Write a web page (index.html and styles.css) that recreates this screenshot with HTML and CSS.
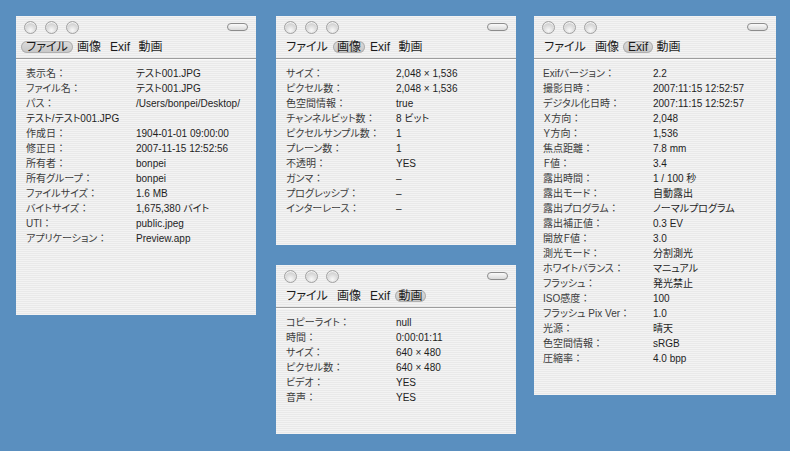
FILE: index.html
```html
<!DOCTYPE html>
<html lang="ja">
<head>
  <meta charset="UTF-8">
  <title>情報</title>
  <link rel="stylesheet" href="styles.css">
</head>
<body>
  <div class="desk">
    <div class="win win-file">
      <div class="titlebar">
        <div class="lights"><span class="light"></span><span class="light"></span><span class="light"></span></div>
        <span class="toolbar-btn"></span>
      </div>
      <div class="tabs">
        <span class="tab t1 active">ファイル</span><span class="tab t2">画像</span><span class="tab t3">Exif</span><span class="tab t4">動画</span>
      </div>
      <div class="sep"></div>
      <div class="rows">
        <div class="row"><span class="label">表示名</span><span class="value">テスト001.JPG</span></div>
        <div class="row"><span class="label">ファイル名</span><span class="value">テスト001.JPG</span></div>
        <div class="row"><span class="label">パス</span><span class="value">/Users/bonpei/Desktop/</span></div>
        <div class="row"><span class="value">テスト/テスト001.JPG</span></div>
        <div class="row"><span class="label">作成日</span><span class="value">1904-01-01 09:00:00</span></div>
        <div class="row"><span class="label">修正日</span><span class="value">2007-11-15 12:52:56</span></div>
        <div class="row"><span class="label">所有者</span><span class="value">bonpei</span></div>
        <div class="row"><span class="label">所有グループ</span><span class="value">bonpei</span></div>
        <div class="row"><span class="label">ファイルサイズ</span><span class="value">1.6 MB</span></div>
        <div class="row"><span class="label">バイトサイズ</span><span class="value">1,675,380 バイト</span></div>
        <div class="row"><span class="label">UTI</span><span class="value">public.jpeg</span></div>
        <div class="row"><span class="label">アプリケーション</span><span class="value">Preview.app</span></div>
      </div>
    </div>

    <div class="col">
      <div class="win win-image">
        <div class="titlebar">
          <div class="lights"><span class="light"></span><span class="light"></span><span class="light"></span></div>
          <span class="toolbar-btn"></span>
        </div>
        <div class="tabs">
          <span class="tab t1">ファイル</span><span class="tab t2 active">画像</span><span class="tab t3">Exif</span><span class="tab t4">動画</span>
        </div>
        <div class="sep"></div>
        <div class="rows">
          <div class="row"><span class="label">サイズ</span><span class="value">2,048 × 1,536</span></div>
          <div class="row"><span class="label">ピクセル数</span><span class="value">2,048 × 1,536</span></div>
          <div class="row"><span class="label">色空間情報</span><span class="value">true</span></div>
          <div class="row"><span class="label">チャンネルビット数</span><span class="value">8 ビット</span></div>
          <div class="row"><span class="label">ピクセルサンプル数</span><span class="value">1</span></div>
          <div class="row"><span class="label">プレーン数</span><span class="value">1</span></div>
          <div class="row"><span class="label">不透明</span><span class="value">YES</span></div>
          <div class="row"><span class="label">ガンマ</span><span class="value">–</span></div>
          <div class="row"><span class="label">プログレッシブ</span><span class="value">–</span></div>
          <div class="row"><span class="label">インターレース</span><span class="value">–</span></div>
        </div>
      </div>

      <div class="win win-movie">
        <div class="titlebar">
          <div class="lights"><span class="light"></span><span class="light"></span><span class="light"></span></div>
          <span class="toolbar-btn"></span>
        </div>
        <div class="tabs">
          <span class="tab t1">ファイル</span><span class="tab t2">画像</span><span class="tab t3">Exif</span><span class="tab t4 active">動画</span>
        </div>
        <div class="sep"></div>
        <div class="rows">
          <div class="row"><span class="label">コピーライト</span><span class="value">null</span></div>
          <div class="row"><span class="label">時間</span><span class="value">0:00:01:11</span></div>
          <div class="row"><span class="label">サイズ</span><span class="value">640 × 480</span></div>
          <div class="row"><span class="label">ピクセル数</span><span class="value">640 × 480</span></div>
          <div class="row"><span class="label">ビデオ</span><span class="value">YES</span></div>
          <div class="row"><span class="label">音声</span><span class="value">YES</span></div>
        </div>
      </div>
    </div>

    <div class="win win-exif">
      <div class="titlebar">
        <div class="lights"><span class="light"></span><span class="light"></span><span class="light"></span></div>
        <span class="toolbar-btn"></span>
      </div>
      <div class="tabs">
        <span class="tab t1">ファイル</span><span class="tab t2">画像</span><span class="tab t3 active">Exif</span><span class="tab t4">動画</span>
      </div>
      <div class="sep"></div>
      <div class="rows">
        <div class="row"><span class="label">Exifバージョン</span><span class="value">2.2</span></div>
        <div class="row"><span class="label">撮影日時</span><span class="value">2007:11:15 12:52:57</span></div>
        <div class="row"><span class="label">デジタル化日時</span><span class="value">2007:11:15 12:52:57</span></div>
        <div class="row"><span class="label">Ｘ方向</span><span class="value">2,048</span></div>
        <div class="row"><span class="label">Ｙ方向</span><span class="value">1,536</span></div>
        <div class="row"><span class="label">焦点距離</span><span class="value">7.8 mm</span></div>
        <div class="row"><span class="label">Ｆ値</span><span class="value">3.4</span></div>
        <div class="row"><span class="label">露出時間</span><span class="value">1 / 100 秒</span></div>
        <div class="row"><span class="label">露出モード</span><span class="value">自動露出</span></div>
        <div class="row"><span class="label">露出プログラム</span><span class="value">ノーマルプログラム</span></div>
        <div class="row"><span class="label">露出補正値</span><span class="value">0.3 EV</span></div>
        <div class="row"><span class="label">開放Ｆ値</span><span class="value">3.0</span></div>
        <div class="row"><span class="label">測光モード</span><span class="value">分割測光</span></div>
        <div class="row"><span class="label">ホワイトバランス</span><span class="value">マニュアル</span></div>
        <div class="row"><span class="label">フラッシュ</span><span class="value">発光禁止</span></div>
        <div class="row"><span class="label">ISO感度</span><span class="value">100</span></div>
        <div class="row"><span class="label">フラッシュ Pix Ver</span><span class="value">1.0</span></div>
        <div class="row"><span class="label">光源</span><span class="value">晴天</span></div>
        <div class="row"><span class="label">色空間情報</span><span class="value">sRGB</span></div>
        <div class="row"><span class="label">圧縮率</span><span class="value">4.0 bpp</span></div>
      </div>
    </div>
  </div>
</body>
</html>
```

FILE: styles.css
```css
* {
  box-sizing: border-box;
}

body {
  margin: 0;
  background: #5a8fbf;
  font-family: "Liberation Sans", "Noto Sans CJK JP", sans-serif;
  font-feature-settings: "palt";
}

.desk {
  display: flex;
  align-items: flex-start;
  padding: 16px 0 0 16px;
  height: 451px;
}

.col {
  display: flex;
  flex: none;
  flex-direction: column;
  gap: 20px;
  margin: 0 18px 0 20px;
}

/* window with aqua pinstripes */
.win {
  flex: none;
  width: 240px;
  background: repeating-linear-gradient(to bottom, #f3f3f3 0, #f3f3f3 1px, #e9e9e9 1px, #e9e9e9 2px);
}

.win-file  { height: 299px; }
.win-image { height: 229px; }
.win-movie { height: 169px; }
.win-exif  { height: 379px; width: 242px; }

.titlebar {
  display: flex;
  justify-content: space-between;
  align-items: flex-start;
  height: 25px;
  padding: 5px 8px 0 8px;
}

.lights {
  display: flex;
  gap: 8px;
}

.light {
  width: 13px;
  height: 13px;
  border-radius: 50%;
  border: 1px solid #a2a2a2;
  background: radial-gradient(circle at 50% 75%, #f8f8f8 0, #dedede 45%, #bfbfbf 100%);
  box-shadow: inset 0 1px 1px rgba(255, 255, 255, 0.9);
}

.toolbar-btn {
  width: 21px;
  height: 8px;
  margin-top: 2px;
  border-radius: 4px;
  border: 1px solid #8c8c8c;
  background: linear-gradient(#fafafa, #d9d9d9);
}

.tabs {
  display: flex;
  height: 12px;
  padding-left: 5px;
  font-size: 12px;
  line-height: 12px;
  color: #1c1c1c;
}

.tab {
  text-align: center;
  border-radius: 6px;
}

.t1 { width: 52px; }
.t2 { width: 32px; }
.t3 { width: 30px; }
.t4 { width: 31px; }

.tab.active {
  background: linear-gradient(#dcdcdc, #c6c6c6);
  box-shadow: inset 0 0 0 1px #b0b0b0;
}

.sep {
  margin-top: 5px;
  height: 2px;
  border-top: 1px solid #9d9d9d;
  border-bottom: 1px solid #fafafa;
}

.rows {
  padding: 6px 0 0 10px;
  font-size: 10px;
}

.win-exif .rows {
  padding-left: 9px;
}

.row {
  display: flex;
  height: 15px;
  line-height: 15px;
  white-space: nowrap;
}

.label {
  width: 110px;
  flex: none;
  color: #3c3c3c;
}

/* full-width colon keeps its space */
.label::after {
  content: "：";
  font-feature-settings: normal;
}

.value {
  color: #1e1e1e;
}
```
